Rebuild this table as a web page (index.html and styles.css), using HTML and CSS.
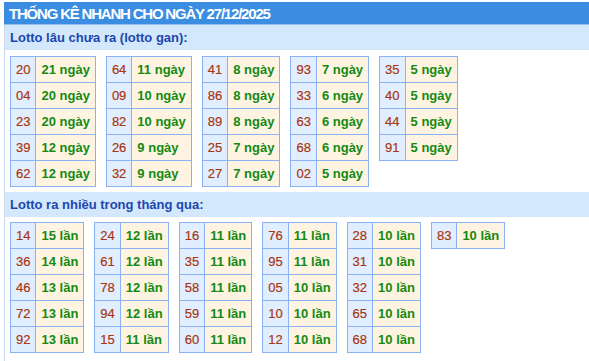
FILE: index.html
```html
<!DOCTYPE html>
<html lang="vi">
<head>
<meta charset="utf-8">
<title>Thống kê nhanh</title>
<link rel="stylesheet" href="styles.css">
</head>
<body>
<div class="box">
  <div class="title">THỐNG KÊ NHANH CHO NGÀY 27/12/2025</div>
  <div class="body">
    <div class="sub">Lotto lâu chưa ra (lotto gan):</div>
    <div class="tables first">
      <table class="t"><tr><td class="n">20</td><td class="v">21 ngày</td></tr><tr><td class="n">04</td><td class="v">20 ngày</td></tr><tr><td class="n">23</td><td class="v">20 ngày</td></tr><tr><td class="n">39</td><td class="v">12 ngày</td></tr><tr><td class="n">62</td><td class="v">12 ngày</td></tr></table>
      <table class="t"><tr><td class="n">64</td><td class="v">11 ngày</td></tr><tr><td class="n">09</td><td class="v">10 ngày</td></tr><tr><td class="n">82</td><td class="v">10 ngày</td></tr><tr><td class="n">26</td><td class="v">9 ngày</td></tr><tr><td class="n">32</td><td class="v">9 ngày</td></tr></table>
      <table class="t"><tr><td class="n">41</td><td class="v">8 ngày</td></tr><tr><td class="n">86</td><td class="v">8 ngày</td></tr><tr><td class="n">89</td><td class="v">8 ngày</td></tr><tr><td class="n">25</td><td class="v">7 ngày</td></tr><tr><td class="n">27</td><td class="v">7 ngày</td></tr></table>
      <table class="t"><tr><td class="n">93</td><td class="v">7 ngày</td></tr><tr><td class="n">33</td><td class="v">6 ngày</td></tr><tr><td class="n">63</td><td class="v">6 ngày</td></tr><tr><td class="n">68</td><td class="v">6 ngày</td></tr><tr><td class="n">02</td><td class="v">5 ngày</td></tr></table>
      <table class="t"><tr><td class="n">35</td><td class="v">5 ngày</td></tr><tr><td class="n">40</td><td class="v">5 ngày</td></tr><tr><td class="n">44</td><td class="v">5 ngày</td></tr><tr><td class="n">91</td><td class="v">5 ngày</td></tr></table>
    </div>
    <div class="sub">Lotto ra nhiều trong tháng qua:</div>
    <div class="tables second">
      <table class="t"><tr><td class="n">14</td><td class="v">15 lần</td></tr><tr><td class="n">36</td><td class="v">14 lần</td></tr><tr><td class="n">46</td><td class="v">13 lần</td></tr><tr><td class="n">72</td><td class="v">13 lần</td></tr><tr><td class="n">92</td><td class="v">13 lần</td></tr></table>
      <table class="t"><tr><td class="n">24</td><td class="v">12 lần</td></tr><tr><td class="n">61</td><td class="v">12 lần</td></tr><tr><td class="n">78</td><td class="v">12 lần</td></tr><tr><td class="n">94</td><td class="v">12 lần</td></tr><tr><td class="n">15</td><td class="v">11 lần</td></tr></table>
      <table class="t"><tr><td class="n">16</td><td class="v">11 lần</td></tr><tr><td class="n">35</td><td class="v">11 lần</td></tr><tr><td class="n">58</td><td class="v">11 lần</td></tr><tr><td class="n">59</td><td class="v">11 lần</td></tr><tr><td class="n">60</td><td class="v">11 lần</td></tr></table>
      <table class="t"><tr><td class="n">76</td><td class="v">11 lần</td></tr><tr><td class="n">95</td><td class="v">11 lần</td></tr><tr><td class="n">05</td><td class="v">10 lần</td></tr><tr><td class="n">10</td><td class="v">10 lần</td></tr><tr><td class="n">12</td><td class="v">10 lần</td></tr></table>
      <table class="t"><tr><td class="n">28</td><td class="v">10 lần</td></tr><tr><td class="n">31</td><td class="v">10 lần</td></tr><tr><td class="n">32</td><td class="v">10 lần</td></tr><tr><td class="n">65</td><td class="v">10 lần</td></tr><tr><td class="n">68</td><td class="v">10 lần</td></tr></table>
      <table class="t"><tr><td class="n">83</td><td class="v">10 lần</td></tr></table>
    </div>
  </div>
</div>
</body>
</html>
```
FILE: styles.css
```css
html, body {
  margin: 0;
  padding: 0;
  background: #ffffff;
}
body {
  font-family: "Liberation Sans", Arial, sans-serif;
  font-size: 13px;
}
.box {
  margin: 2px 0 0 4px;
}
.title {
  height: 22px;
  line-height: 23px;
  border-bottom: 1px solid #8fc0ef;
  background: #3a8de0;
  color: #ffffff;
  font-weight: bold;
  font-size: 15px;
  letter-spacing: -1.2px;
  padding-left: 5px;
  white-space: nowrap;
  overflow: hidden;
}
.body {
  border-left: 1px solid #c9d9ec;
  padding-bottom: 9px;
}
.sub {
  height: 25px;
  line-height: 25px;
  background: #d3e8fd;
  color: #1c47ad;
  font-weight: bold;
  font-size: 13px;
  padding-left: 5px;
}
.tables {
  display: flex;
  align-items: flex-start;
  gap: 10px;
  padding: 6px 5px 5px 5px;
}
.second {
  padding-top: 5px;
}
.t {
  border-collapse: collapse;
}
.t td {
  height: 25px;
  padding: 0 5px;
  border: 1px solid #8bb1f5;
  font-size: 13px;
  white-space: nowrap;
  text-align: left;
}
.n {
  background: #e1eeff;
  color: #a8360f;
  -webkit-text-stroke: 0.2px #a8360f;
}
.v {
  background: #fff4e2;
  color: #138a13;
  font-weight: bold;
}
```
